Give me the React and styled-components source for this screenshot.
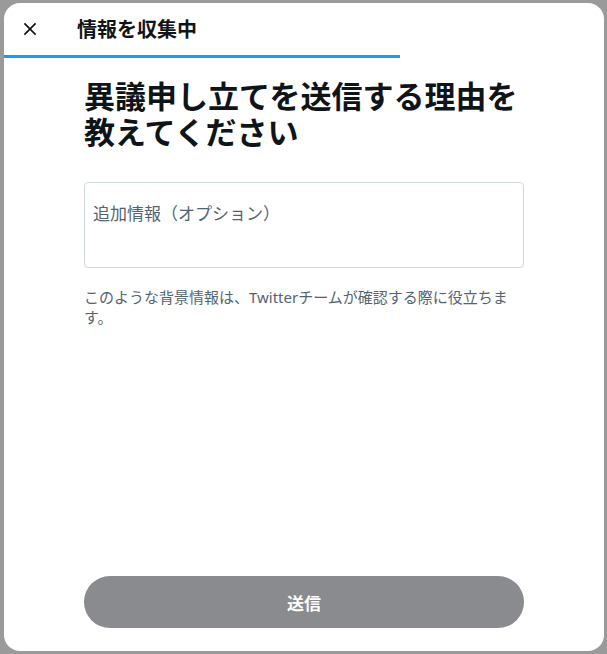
import React from "react";
import styled, { createGlobalStyle } from "styled-components";

const Global = createGlobalStyle`
  html, body {
    margin: 0;
    padding: 0;
    background: #9a9a9a;
    font-family: "Noto Sans", "Noto Sans CJK JP", sans-serif;
    color: #0f1419;
  }
  * { box-sizing: border-box; }
`;

const Backdrop = styled.div`
  width: 607px;
  height: 654px;
  padding: 3px 3px 3px 4px;
  background: #9a9a9a;
`;

const Modal = styled.div`
  width: 600px;
  height: 648px;
  background: #ffffff;
  border-radius: 16px;
  display: flex;
  flex-direction: column;
  overflow: hidden;
`;

const Header = styled.div`
  height: 52px;
  display: flex;
  align-items: center;
  padding: 0 16px 0 9px;
  gap: 30px;
`;

const CloseButton = styled.button`
  width: 34px;
  height: 34px;
  border: none;
  border-radius: 50%;
  background: transparent;
  display: flex;
  align-items: center;
  justify-content: center;
  padding: 0;
  cursor: pointer;
  color: #0f1419;
`;

const Title = styled.h2`
  margin: 0 0 1px;
  font-size: 20px;
  font-weight: 700;
  line-height: 24px;
  font-family: "Noto Sans CJK JP", sans-serif;
`;

const ProgressTrack = styled.div`
  height: 3px;
  width: 100%;
  background: transparent;
`;

const ProgressFill = styled.div`
  height: 100%;
  background: #1d9bf0;
`;

const Body = styled.div`
  flex: 1;
  display: flex;
  flex-direction: column;
  padding: 19px 80px 23px;
`;

const Heading = styled.h1`
  margin: 0 0 33px;
  font-size: 31px;
  line-height: 36px;
  font-weight: 700;
  font-family: "Noto Sans CJK JP", sans-serif;
`;

const TextArea = styled.textarea`
  width: 100%;
  height: 86px;
  border: 1px solid #cfd9de;
  border-radius: 4px;
  padding: 18px 8px 8px;
  font-family: "Noto Sans CJK JP", sans-serif;
  font-size: 17px;
  line-height: 24px;
  color: #0f1419;
  resize: none;
  outline: none;
  display: block;

  &::placeholder {
    color: #536471;
  }
`;

const Help = styled.p`
  margin: 19px 0 0;
  font-size: 15px;
  line-height: 20px;
  color: #536471;
`;

const Footer = styled.div`
  margin-top: auto;
`;

const SubmitButton = styled.button`
  width: 100%;
  height: 52px;
  border: none;
  border-radius: 26px;
  background: #8a8b8f;
  color: #ffffff;
  font-family: "Noto Sans CJK JP", sans-serif;
  font-size: 17px;
  font-weight: 700;
  cursor: default;
`;

const CloseIcon = () => (
  <svg width="20" height="20" viewBox="0 0 24 24" fill="currentColor" aria-hidden="true">
    <path d="M10.59 12L4.54 5.96l1.42-1.42L12 10.59l6.04-6.05 1.42 1.42L13.41 12l6.05 6.04-1.42 1.42L12 13.41l-6.04 6.05-1.42-1.42L10.59 12z" />
  </svg>
);

export default function App() {
  const progress = 66;
  return (
    <>
      <Global />
      <Backdrop>
        <Modal>
          <Header>
            <CloseButton aria-label="閉じる">
              <CloseIcon />
            </CloseButton>
            <Title>情報を収集中</Title>
          </Header>
          <ProgressTrack>
            <ProgressFill style={{ width: `${progress}%` }} />
          </ProgressTrack>
          <Body>
            <Heading>異議申し立てを送信する理由を教えてください</Heading>
            <TextArea placeholder="追加情報（オプション）" />
            <Help>このような背景情報は、Twitterチームが確認する際に役立ちます。</Help>
            <Footer>
              <SubmitButton disabled>送信</SubmitButton>
            </Footer>
          </Body>
        </Modal>
      </Backdrop>
    </>
  );
}
